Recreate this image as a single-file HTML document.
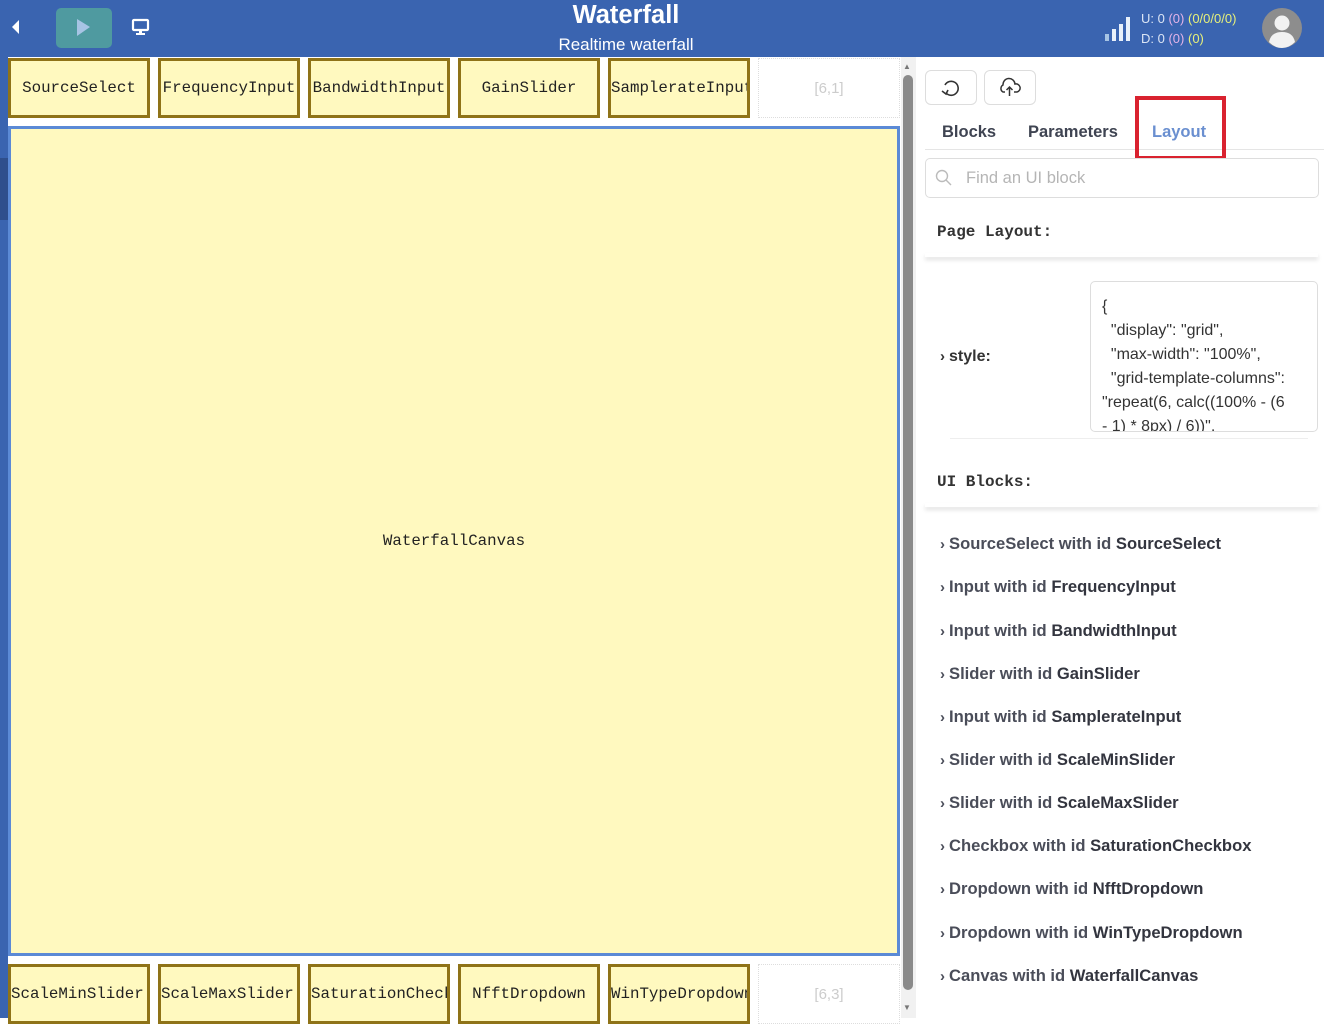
<!DOCTYPE html>
<html><head><meta charset="utf-8"><style>
*{box-sizing:border-box;margin:0;padding:0}
body{width:1324px;height:1018px;overflow:hidden;background:#fff;font-family:"Liberation Sans",sans-serif;position:relative}
.hdr{position:absolute;left:0;top:0;width:1324px;height:57px;background:#3a64b0;color:#fff}
.abs{position:absolute}
.cell{position:absolute;width:142px;height:60px;background:#fff9bf;border:3px solid #8f7318;font-family:"Liberation Mono",monospace;font-size:15.8px;color:#222;display:flex;align-items:center;justify-content:center;white-space:nowrap;overflow:hidden}
.empty{position:absolute;width:142px;height:60px;border:1px dotted #ddd;color:#ccc;font-size:15px;display:flex;align-items:center;justify-content:center}
.mono{font-family:"Liberation Mono",monospace;font-weight:bold;font-size:16px;color:#333}
.item{position:absolute;left:940px;font-size:16.6px;font-weight:bold;color:#4a4d59}
.item b{color:#33353f}
.chev{font-size:15px;margin-right:4px}
</style></head><body>
<div class="hdr">
 <svg class="abs" style="left:10px;top:19px" width="10" height="16"><path d="M9 1 L2 8 L9 15 Z" fill="#fff"/></svg>
 <div class="abs" style="left:56px;top:8px;width:56px;height:40px;background:#4f9aa0;border-radius:5px"></div>
 <svg class="abs" style="left:76px;top:18px" width="16" height="20"><path d="M1 1 L14 9 L1 18 Z" fill="#a7c4e4"/></svg>
 <svg class="abs" style="left:131px;top:18px" width="20" height="18"><rect x="2" y="2" width="15" height="10" rx="1" fill="none" stroke="#fff" stroke-width="2.2"/><rect x="8" y="12" width="3" height="3" fill="#fff"/><rect x="5" y="15" width="9" height="2" fill="#fff"/></svg>
 <div class="abs" style="left:0;width:1252px;top:1px;text-align:center;font-size:25.5px;font-weight:bold">Waterfall</div>
 <div class="abs" style="left:0;width:1252px;top:35px;text-align:center;font-size:17px">Realtime waterfall</div>
 <svg class="abs" style="left:1104px;top:14px" width="32" height="28"><rect x="1" y="20" width="4" height="7" fill="#a7c4e4"/><rect x="8" y="15" width="4" height="12" fill="#e8f0fa"/><rect x="15" y="10" width="4" height="17" fill="#e8f0fa"/><rect x="22" y="3" width="4" height="24" fill="#e8f0fa"/></svg>
 <div class="abs" style="left:1141px;top:11px;font-size:13px;color:#dbe5f5">U: 0 <span style="color:#e2b3e8">(0)</span> <span style="color:#e6f07a">(0/0/0/0)</span></div>
 <div class="abs" style="left:1141px;top:31px;font-size:13px;color:#dbe5f5">D: 0 <span style="color:#e2b3e8">(0)</span> <span style="color:#e6f07a">(0)</span></div>
 <svg class="abs" style="left:1261px;top:7px" width="42" height="42"><circle cx="21" cy="21" r="20" fill="#8d8d8d"/><circle cx="21" cy="16" r="7.5" fill="#f2f2f2"/><path d="M8 35 Q10 25 21 25 Q32 25 34 35 Q28 41 21 41 Q14 41 8 35Z" fill="#f2f2f2"/></svg>
</div>
<div class="abs" style="left:0;top:57px;width:8px;height:961px;background:#3a64b0"></div>
<div class="abs" style="left:0;top:158px;width:8px;height:62px;background:#2f4f8c"></div>

<div class="cell" style="left:8px;top:58px">SourceSelect</div>
<div class="cell" style="left:158px;top:58px">FrequencyInput</div>
<div class="cell" style="left:308px;top:58px">BandwidthInput</div>
<div class="cell" style="left:458px;top:58px">GainSlider</div>
<div class="cell" style="left:608px;top:58px;justify-content:flex-start">SamplerateInput</div>
<div class="empty" style="left:758px;top:58px">[6,1]</div>

<div class="abs" style="left:8px;top:126px;width:892px;height:830px;background:#fff9bf;border:3px solid #5b8ad6;display:flex;align-items:center;justify-content:center;font-family:'Liberation Mono',monospace;font-size:15.8px;color:#222">WaterfallCanvas</div>

<div class="cell" style="left:8px;top:964px;justify-content:flex-start">ScaleMinSlider</div>
<div class="cell" style="left:158px;top:964px;justify-content:flex-start">ScaleMaxSlider</div>
<div class="cell" style="left:308px;top:964px;justify-content:flex-start">SaturationCheckbox</div>
<div class="cell" style="left:458px;top:964px">NfftDropdown</div>
<div class="cell" style="left:608px;top:964px;justify-content:flex-start">WinTypeDropdown</div>
<div class="empty" style="left:758px;top:964px">[6,3]</div>

<div class="abs" style="left:901px;top:57px;width:15px;height:961px;background:#f1f1f1"></div>
<div class="abs" style="left:903px;top:75px;width:10px;height:915px;background:#8a8a8a;border-radius:5px"></div>
<div class="abs" style="left:903px;top:62px;font-size:8px;color:#777">▲</div>
<div class="abs" style="left:903px;top:1003px;font-size:8px;color:#777">▼</div>

<div class="abs" style="left:925px;top:70px;width:52px;height:35px;border:1px solid #ddd;border-radius:6px"></div>
<svg class="abs" style="left:940px;top:78px" width="22" height="20"><path d="M6 15 A7 7 0 1 0 5 7" fill="none" stroke="#333" stroke-width="1.6"/><path d="M2 13 L6 16 L8 12" fill="none" stroke="#333" stroke-width="1.6"/></svg>
<div class="abs" style="left:984px;top:70px;width:52px;height:35px;border:1px solid #ddd;border-radius:6px"></div>
<svg class="abs" style="left:998px;top:77px" width="24" height="22"><path d="M7 15 H5 A4 4 0 0 1 5 8 A6 6 0 0 1 17 7 A4 4 0 0 1 19 15 H16" fill="none" stroke="#333" stroke-width="1.5"/><path d="M11.5 19 V10 M8.5 13 L11.5 10 L14.5 13" fill="none" stroke="#333" stroke-width="1.5"/></svg>

<div class="abs" style="left:942px;top:123px;font-size:16.5px;font-weight:bold;color:#3f4452">Blocks</div>
<div class="abs" style="left:1028px;top:123px;font-size:16.5px;font-weight:bold;color:#3f4452">Parameters</div>
<div class="abs" style="left:1152px;top:123px;font-size:16.5px;font-weight:bold;color:#6a8fd0">Layout</div>
<div class="abs" style="left:925px;top:149px;width:399px;height:1px;background:#e5e5e5"></div>
<div class="abs" style="left:1135px;top:96px;width:91px;height:64px;border:4px solid #d9222f"></div>

<div class="abs" style="left:925px;top:158px;width:394px;height:40px;border:1px solid #ddd;border-radius:5px;background:#fff"></div>
<svg class="abs" style="left:935px;top:169px" width="18" height="18"><circle cx="7" cy="7" r="5.5" fill="none" stroke="#bbb" stroke-width="1.4"/><path d="M11 11 L16 16" stroke="#bbb" stroke-width="1.4"/></svg>
<div class="abs" style="left:966px;top:169px;font-size:16.5px;color:#b5b5b5">Find an UI block</div>

<div class="abs mono" style="left:937px;top:223px">Page Layout:</div>
<div class="abs" style="left:925px;top:253px;width:393px;height:4px;box-shadow:0 3px 4px rgba(0,0,0,.12)"></div>
<div class="abs" style="left:940px;top:348px;font-size:16px;font-weight:bold;color:#333"><span class="chev">›</span>style:</div>
<div class="abs" style="left:1090px;top:281px;width:228px;height:151px;border:1px solid #ddd;border-radius:5px;overflow:hidden;padding:13px 0 0 11px;font-size:16px;line-height:24px;color:#333;white-space:pre">{
  "display": "grid",
  "max-width": "100%",
  "grid-template-columns":
"repeat(6, calc((100% - (6
- 1) * 8px) / 6))",</div>
<div class="abs" style="left:950px;top:438px;width:358px;height:1px;background:#eee"></div>
<div class="abs mono" style="left:937px;top:473px">UI Blocks:</div>
<div class="abs" style="left:925px;top:503px;width:393px;height:4px;box-shadow:0 3px 4px rgba(0,0,0,.12)"></div>

<div class="item" style="top:534px"><span class="chev">›</span>SourceSelect with id <b>SourceSelect</b></div>
<div class="item" style="top:577px"><span class="chev">›</span>Input with id <b>FrequencyInput</b></div>
<div class="item" style="top:621px"><span class="chev">›</span>Input with id <b>BandwidthInput</b></div>
<div class="item" style="top:664px"><span class="chev">›</span>Slider with id <b>GainSlider</b></div>
<div class="item" style="top:707px"><span class="chev">›</span>Input with id <b>SamplerateInput</b></div>
<div class="item" style="top:750px"><span class="chev">›</span>Slider with id <b>ScaleMinSlider</b></div>
<div class="item" style="top:793px"><span class="chev">›</span>Slider with id <b>ScaleMaxSlider</b></div>
<div class="item" style="top:836px"><span class="chev">›</span>Checkbox with id <b>SaturationCheckbox</b></div>
<div class="item" style="top:879px"><span class="chev">›</span>Dropdown with id <b>NfftDropdown</b></div>
<div class="item" style="top:923px"><span class="chev">›</span>Dropdown with id <b>WinTypeDropdown</b></div>
<div class="item" style="top:966px"><span class="chev">›</span>Canvas with id <b>WaterfallCanvas</b></div>
</body></html>
